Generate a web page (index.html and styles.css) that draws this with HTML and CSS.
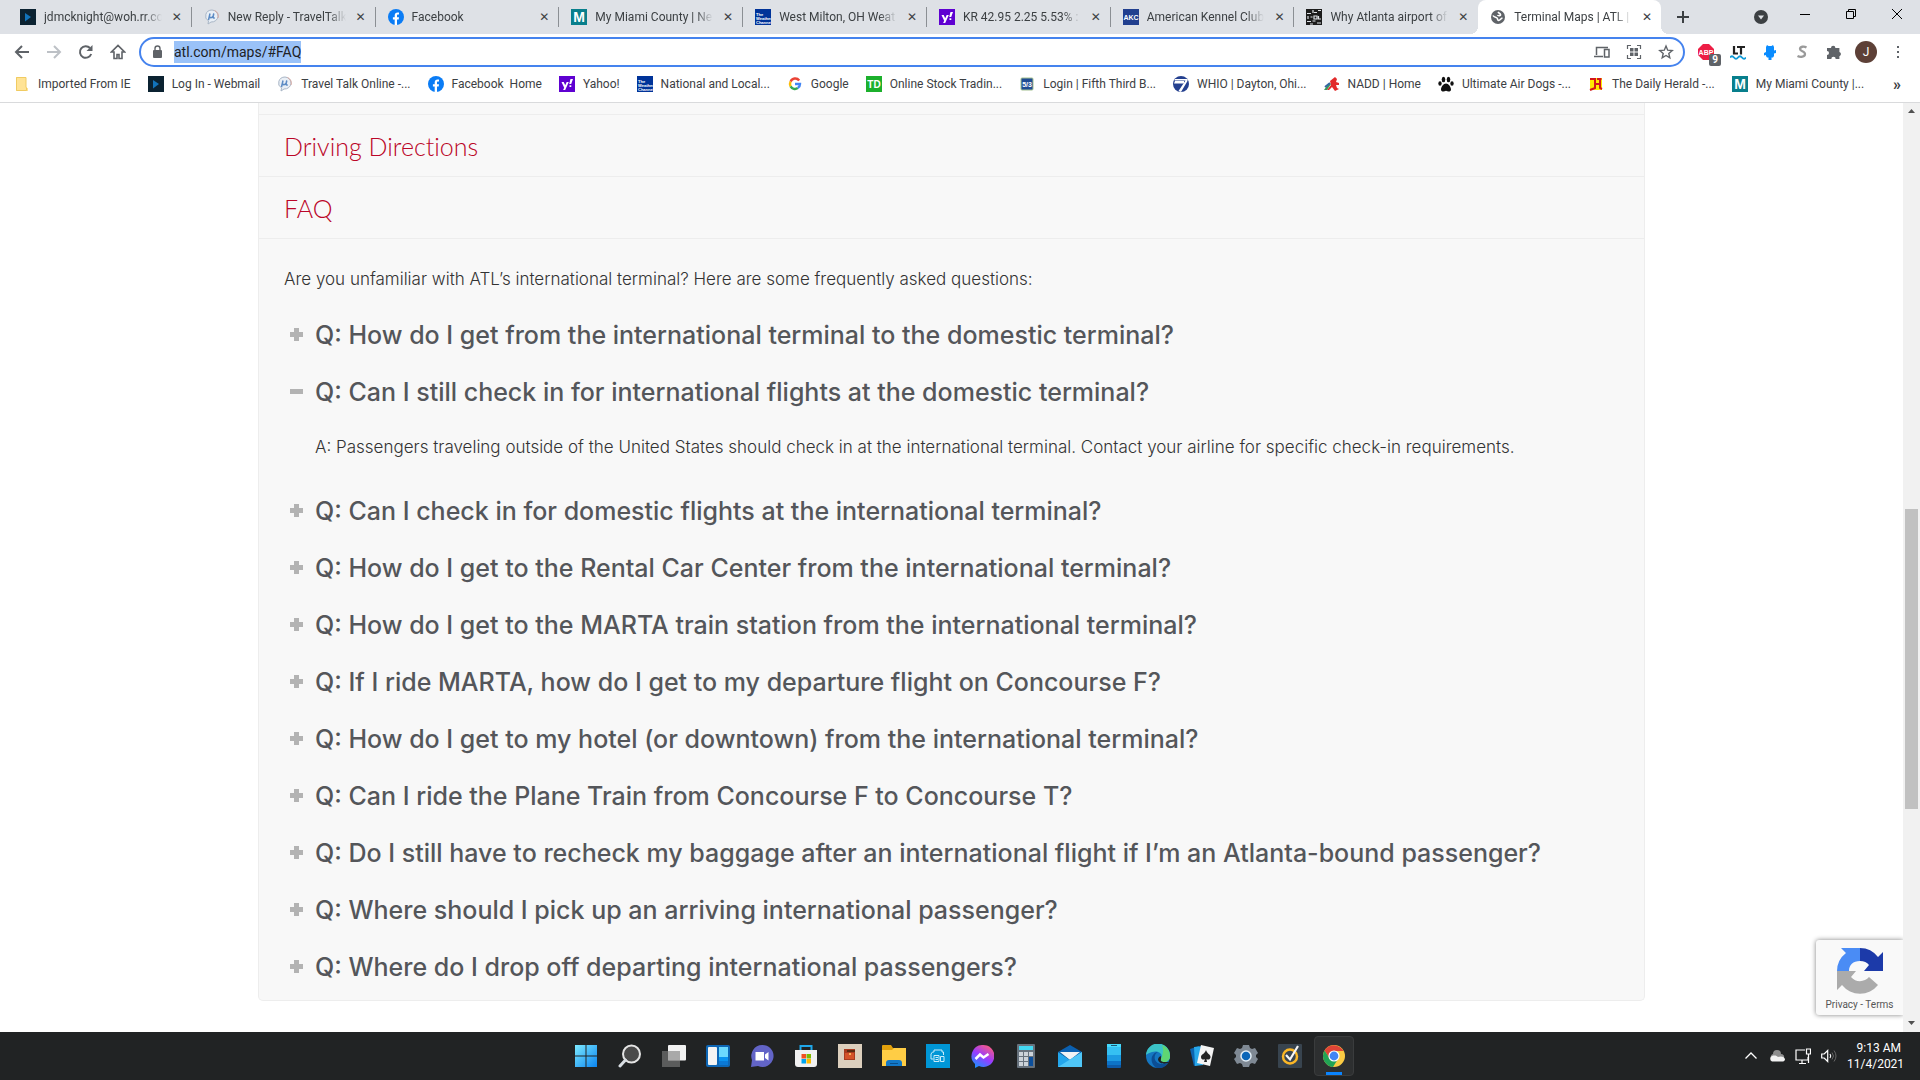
FILE: index.html
```html
<!DOCTYPE html>
<html lang="en">
<head>
    <meta charset="UTF-8">
    <meta name="viewport" content="width=device-width, initial-scale=1.0">
    <title>Terminal Maps | ATL</title>
    <link rel="stylesheet" href="styles.css">
</head>
<body>
    <!-- Shared icons -->
    <svg class="sprite" aria-hidden="true">
        <symbol id="i-play" viewBox="0 0 16 16"><rect width="16" height="16" fill="#0b2231"/><path d="M5 4l6 4-6 4.500z" fill="#1273ba"/></symbol>
        <symbol id="i-talk" viewBox="0 0 16 16"><path d="M8 1a6.500 6 0 1 1-1 12l-3 2 .5-3A6.500 6 0 0 1 8 1z" fill="#e9eff6" stroke="#a9b6c6"/><path d="M10.500 1.500A6 6 0 0 1 14 9" fill="none" stroke="#d9a9a0"/><path d="M6 4.500L4.500 11M5.600 7c-.4 2.500 2.800 2.200 3.600-.3l.6-2.200-.8 3.800c0 1 1 1 1.600.2" fill="none" stroke="#5c8bc4" stroke-width="1.500"/></symbol>
        <symbol id="i-fb" viewBox="0 0 16 16"><circle cx="8" cy="8" r="8" fill="#0a7cf5"/><path d="M6.700 16v-5.400H4.900V8.200h1.800V6.600c0-2 1.100-3 2.900-3 .8 0 1.400.1 1.400.1v1.900h-.9c-.9 0-1.100.5-1.100 1.100v1.500h2l-.3 2.400H9V16z" fill="#fff"/></symbol>
        <symbol id="i-miami" viewBox="0 0 16 16"><rect width="16" height="16" fill="#087f8c"/><text x="8" y="13" class="glyph" font-size="14" text-anchor="middle" fill="#fff">M</text></symbol>
        <symbol id="i-weather" viewBox="0 0 16 16"><rect width="16" height="16" fill="#003399"/><text x="1" y="7" class="glyph" font-size="4" fill="#fff">The</text><text x="1" y="11" class="glyph" font-size="4" fill="#fff">Weather</text><text x="1" y="15" class="glyph" font-size="4" fill="#fff">Channel</text></symbol>
        <symbol id="i-yahoo" viewBox="0 0 16 16"><rect width="16" height="16" fill="#5f01d1"/><path d="M2.500 6h2.200l1.500 3.300L7.700 6h2.100l-3.600 8H4.100l1.100-2.300zM11.500 3H14l-1.800 5h-2zM10.500 9.200h1.800v1.700h-1.800z" fill="#fff"/></symbol>
        <symbol id="i-google" viewBox="0 0 16 16"><path d="M12.200 4.500A5 5 0 0 0 3.600 5.600" fill="none" stroke="#ea4335" stroke-width="2.400"/><path d="M3.600 5.600a5 5 0 0 0 0 4.800" fill="none" stroke="#fbbc05" stroke-width="2.400"/><path d="M3.600 10.400a5 5 0 0 0 7.200 1.700" fill="none" stroke="#34a853" stroke-width="2.400"/><path d="M8 8h5a5 5 0 0 1-2.200 4.100" fill="none" stroke="#4285f4" stroke-width="2.400"/></symbol>
    </svg>

    <!-- Tab strip -->
    <header class="tab-strip">
        <nav class="tabs">
            <div class="tab"><svg class="icon"><use href="#i-play"/></svg><a href="#mail">jdmcknight@woh.rr.co</a><button class="close" aria-label="Close">✕</button></div>
            <div class="tab"><svg class="icon"><use href="#i-talk"/></svg><a href="#talk">New Reply - TravelTalk</a><button class="close" aria-label="Close">✕</button></div>
            <div class="tab"><svg class="icon"><use href="#i-fb"/></svg><a href="#fb">Facebook</a><button class="close" aria-label="Close">✕</button></div>
            <div class="tab"><svg class="icon"><use href="#i-miami"/></svg><a href="#miami">My Miami County | Ne</a><button class="close" aria-label="Close">✕</button></div>
            <div class="tab"><svg class="icon"><use href="#i-weather"/></svg><a href="#weather">West Milton, OH Weat</a><button class="close" aria-label="Close">✕</button></div>
            <div class="tab"><svg class="icon"><use href="#i-yahoo"/></svg><a href="#kr">KR 42.95 2.25 5.53% :</a><button class="close" aria-label="Close">✕</button></div>
            <div class="tab"><svg class="icon" viewBox="0 0 16 16"><rect width="16" height="16" fill="#213f8f"/><text x="8" y="11" class="glyph" font-size="7" text-anchor="middle" fill="#fff">AKC</text></svg><a href="#akc">American Kennel Club</a><button class="close" aria-label="Close">✕</button></div>
            <div class="tab last"><svg class="icon" viewBox="0 0 16 16"><rect width="16" height="16" fill="#1c1c1c"/><path d="M1 4.500h4M7 1v3M8 3.500h3M12 1.500h3M2 7v3M4.500 8h2M8 7h3v3H8zM12.500 7v3h2.500M1 12.500h4M6.500 12h3M11 14h4M4 15h3" fill="none" stroke="#dee1e6" stroke-width="1.200"/></svg><a href="#why">Why Atlanta airport of</a><button class="close" aria-label="Close">✕</button></div>
            <div class="tab active"><svg class="icon" viewBox="0 0 16 16"><circle cx="8" cy="8" r="7" fill="#5f6368"/><path d="M3 6.500c1 2 3 1.500 4 2.500s0 2 1.500 2.500c2 0 2-2 4-2.500M8 3c1 1.500 2 1 2.500 2.500S8 7 7.500 6" fill="none" stroke="#fff" stroke-width="1.600"/></svg><a href="#maps">Terminal Maps | ATL |</a><button class="close" aria-label="Close">✕</button></div>
        </nav>
        <div class="window-tools">
            <button aria-label="New tab"><svg class="icon" viewBox="0 0 16 16"><path d="M8 2v12M2 8h12" stroke="#3c4043" stroke-width="2"/></svg></button>
            <span class="spacer"></span>
            <button aria-label="Search tabs"><svg class="icon" viewBox="0 0 16 16"><circle cx="8" cy="8" r="7" fill="#3c4043"/><path d="M5 6.500h6L8 10.500z" fill="#dee1e6"/></svg></button>
            <div class="window-buttons">
                <button aria-label="Minimize"><svg class="icon" viewBox="0 0 16 16"><path d="M3 8.500h10" stroke="#000"/></svg></button>
                <button aria-label="Restore"><svg class="icon" viewBox="0 0 16 16"><path d="M3.500 5.500h7v7h-7zM5.500 5.500v-2h7v7h-2" fill="none" stroke="#000"/></svg></button>
                <button aria-label="Close window"><svg class="icon" viewBox="0 0 16 16"><path d="M3 3l10 10M13 3L3 13" stroke="#000"/></svg></button>
            </div>
        </div>
    </header>

    <!-- Address bar -->
    <div class="toolbar">
        <button aria-label="Back"><svg class="icon" viewBox="0 0 16 16"><path d="M15 8H2.500M8 2L2 8l6 6" fill="none" stroke="#5f6368" stroke-width="2"/></svg></button>
        <button aria-label="Forward"><svg class="icon" viewBox="0 0 16 16"><path d="M1 8h12.500M8 2l6 6-6 6" fill="none" stroke="#bdc1c6" stroke-width="2"/></svg></button>
        <button aria-label="Reload"><svg class="icon" viewBox="0 0 16 16"><path d="M13.200 10A5.800 5.800 0 1 1 12 4" fill="none" stroke="#5f6368" stroke-width="2"/><path d="M14.500 1v6h-6z" fill="#5f6368"/></svg></button>
        <button aria-label="Home"><svg class="icon" viewBox="0 0 16 16"><path d="M4 8v6.500h3v-4h2v4h3V8h2.500L8 1.500 1.500 8z" fill="none" stroke="#5f6368" stroke-width="1.600"/></svg></button>
        <div class="omnibox">
            <svg class="icon" viewBox="0 0 16 16"><rect x="4" y="6" width="9" height="8" rx="1" fill="#5f6368"/><path d="M6 6V4.500a2.500 2.500 0 0 1 5 0V6" fill="none" stroke="#5f6368" stroke-width="1.400"/></svg>
            <input type="text" id="url" value="atl.com/maps/#FAQ" aria-label="Address" spellcheck="false">
            <button aria-label="Send to device"><svg class="icon" viewBox="0 0 16 16"><path d="M2.500 11V3.500H14M0 12.500h9M10.500 5.500h4.500v7.500h-4.500z" fill="none" stroke="#5f6368" stroke-width="1.500"/></svg></button>
            <button aria-label="QR code"><svg class="icon" viewBox="0 0 16 16"><path d="M1.500 5V1.500H5M11 1.500h3.500V5M14.500 11v3.500H11M5 14.500H1.500V11" fill="none" stroke="#5f6368" stroke-width="1.200"/><path d="M4 4h3.500v3.500H4zM8.500 4H12v3.500H8.500zM4 8.500h3.500V12H4zM8.500 8.500H12V12H8.500z" fill="#5f6368"/></svg></button>
            <button aria-label="Bookmark"><svg class="icon" viewBox="0 0 16 16"><path d="M8 2l1.700 4.200 4.500.3-3.400 2.900 1 4.400L8 11.500l-3.800 2.300 1-4.400L1.800 6.500l4.500-.3z" fill="none" stroke="#5f6368" stroke-width="1.400"/></svg></button>
        </div>
        <button class="abp" aria-label="Adblock Plus"><svg class="icon" viewBox="0 0 16 16"><path d="M5 0h6l5 5v6l-5 5H5l-5-5V5z" fill="#ed1e45"/><text x="8" y="11" class="glyph" font-size="7" text-anchor="middle" fill="#fff">ABP</text></svg><span class="badge">9</span></button>
        <button aria-label="LanguageTool"><svg class="icon" viewBox="0 0 16 16"><path d="M4 2v7.500h4M7 3h8M11 3v7.500" fill="none" stroke="#222" stroke-width="2.200"/><path d="M0 13.500q2-2.500 4 0t4 0 4 0 4 0" fill="none" stroke="#0f9bd8" stroke-width="1.800"/></svg></button>
        <button aria-label="Assistant"><svg class="icon" viewBox="0 0 16 16"><path d="M5 1l1.500 1h3L11 1l1 2v3.500l2-.5v3l-2 .5V12l-1 1.500H9.500V16h-3v-2.500H5L4 12v-1l-2 .5V9l2-1V3z" fill="#0a8cff"/></svg></button>
        <button aria-label="Similar sites"><svg class="icon" viewBox="0 0 16 16"><path d="M12.500 3.500C10 2 6 2.500 6 5s5 2 5 5-4.500 3.500-7.500 2" fill="none" stroke="#9a9a9a" stroke-width="2.300"/></svg></button>
        <button aria-label="Extensions"><svg class="icon" viewBox="0 0 16 16"><path d="M1 4h4a2.200 2.200 0 0 1 4.400 0h4v4a2.200 2.200 0 0 1 0 4.200V15H9.700a2.200 2.200 0 0 0-4.400 0H1v-4a2 2 0 0 0 0-4z" fill="#5f6368"/></svg></button>
        <button class="avatar" aria-label="Profile">J</button>
        <button aria-label="Menu"><svg class="icon" viewBox="0 0 16 16"><path d="M7 2h2v2H7zM7 7h2v2H7zM7 12h2v2H7z" fill="#5f6368"/></svg></button>
    </div>

    <!-- Bookmarks -->
    <nav class="bookmarks">
        <a href="#b1"><svg class="icon" viewBox="0 0 16 16"><path d="M2 1h10v11h2v3H2z" fill="#ffe395"/><path d="M12.500 11.500v3H2.500v-13h9.500v10z" fill="none" stroke="#f0cb62"/></svg>Imported From IE</a>
        <a href="#b2"><svg class="icon"><use href="#i-play"/></svg>Log In - Webmail</a>
        <a href="#b3"><svg class="icon"><use href="#i-talk"/></svg>Travel Talk Online -...</a>
        <a href="#b4"><svg class="icon"><use href="#i-fb"/></svg>Facebook&nbsp; Home</a>
        <a href="#b5"><svg class="icon"><use href="#i-yahoo"/></svg>Yahoo!</a>
        <a href="#b6"><svg class="icon"><use href="#i-weather"/></svg>National and Local...</a>
        <a href="#b7"><svg class="icon"><use href="#i-google"/></svg>Google</a>
        <a href="#b8"><svg class="icon" viewBox="0 0 16 16"><rect width="16" height="16" fill="#1cb02c"/><text x="8" y="12" class="glyph" font-size="10" text-anchor="middle" fill="#fff">TD</text></svg>Online Stock Tradin...</a>
        <a href="#b9"><svg class="icon" viewBox="0 0 16 16"><rect x="2" y="2" width="12" height="12" rx="1" fill="#1f4b94" stroke="#a3c08f"/><text x="8" y="11" class="glyph" font-size="7" text-anchor="middle" fill="#fff">5/3</text></svg>Login | Fifth Third B...</a>
        <a href="#b10"><svg class="icon" viewBox="0 0 16 16"><circle cx="8" cy="8" r="8" fill="#24408f"/><path d="M1.500 4.500h11L5.500 15 8 16l6.500-11V3H2zM2 5h9v2.500H1z" fill="#fff"/></svg>WHIO | Dayton, Ohi...</a>
        <a href="#b11"><svg class="icon" viewBox="0 0 16 16"><path d="M0 14L5 7l2 1-4 6z" fill="#3a9a5c"/><path d="M1 11l5-4" stroke="#3465a4" stroke-width="2"/><path d="M6 5l5-4 2 2-1 3 3 1v2h-3l1 3 2 1-4 2-3-4-3 3H3l4-5z" fill="#e22b2b"/></svg>NADD | Home</a>
        <a href="#b12"><svg class="icon" viewBox="0 0 16 16"><g fill="#111"><ellipse cx="5.500" cy="3.500" rx="1.800" ry="2.700"/><ellipse cx="10.500" cy="3.500" rx="1.800" ry="2.700"/><ellipse cx="2" cy="7.500" rx="1.700" ry="2.200"/><ellipse cx="14" cy="7.500" rx="1.700" ry="2.200"/><path d="M8 7.500c2.500 0 5 3.500 5 6s-3 2.500-5 1.300c-2 1.200-5 1.200-5-1.300s2.500-6 5-6z"/></g></svg>Ultimate Air Dogs -...</a>
        <a href="#b13"><svg class="icon" viewBox="0 0 16 16"><rect x="2" y="2" width="12" height="12" fill="#ffe900"/><path d="M2 3h5v9l-5 2M7 8h5M9 3h4.500M12 3v9l2 1" fill="none" stroke="#d2161b" stroke-width="2"/></svg>The Daily Herald -...</a>
        <a href="#b14"><svg class="icon"><use href="#i-miami"/></svg>My Miami County |...</a>
        <button class="more" aria-label="More bookmarks">»</button>
    </nav>

    <!-- Page -->
    <div class="viewport">
        <main class="page">
            <section class="accordion">
                <div class="previous-row"></div>
                <h2><a href="#driving">Driving Directions</a></h2>
                <h2><a href="#FAQ">FAQ</a></h2>
                <div class="faq">
                    <p class="intro">Are you unfamiliar with ATL’s international terminal? Here are some frequently asked questions:</p>
                    <h3><button class="question">Q: How do I get from the international terminal to the domestic terminal?</button></h3>
                    <h3><button class="question open">Q: Can I still check in for international flights at the domestic terminal?</button></h3>
                    <p class="answer">A: Passengers traveling outside of the United States should check in at the international terminal. Contact your airline for specific check-in requirements.</p>
                    <h3><button class="question">Q: Can I check in for domestic flights at the international terminal?</button></h3>
                    <h3><button class="question">Q: How do I get to the Rental Car Center from the international terminal?</button></h3>
                    <h3><button class="question">Q: How do I get to the MARTA train station from the international terminal?</button></h3>
                    <h3><button class="question">Q: If I ride MARTA, how do I get to my departure flight on Concourse F?</button></h3>
                    <h3><button class="question">Q: How do I get to my hotel (or downtown) from the international terminal?</button></h3>
                    <h3><button class="question">Q: Can I ride the Plane Train from Concourse F to Concourse T?</button></h3>
                    <h3><button class="question">Q: Do I still have to recheck my baggage after an international flight if I’m an Atlanta-bound passenger?</button></h3>
                    <h3><button class="question">Q: Where should I pick up an arriving international passenger?</button></h3>
                    <h3><button class="question">Q: Where do I drop off departing international passengers?</button></h3>
                </div>
            </section>
            <aside class="recaptcha">
                <svg class="recaptcha-logo" viewBox="0 0 46 46"><path d="M46 23V4l-5 5A23 23 0 0 0 23 0v13c4 0 7 1.500 9 4l-5 6z" fill="#1c3aa9"/><path d="M23 0H4l5 5a23 23 0 0 0-9 18h12c0-6 4-10 11-10z" fill="#4a8cf5"/><path d="M0 23v19l5-5a23 23 0 0 0 36 0l-9-8c-4 5-13 6-18 0l5-6z" fill="#ababab"/></svg>
                <span><a href="#privacy">Privacy</a> - <a href="#terms">Terms</a></span>
            </aside>
        </main>
        <div class="scrollbar"><span class="arrow up"></span><span class="track"><span class="thumb"></span></span><span class="arrow down"></span></div>
    </div>

    <!-- Taskbar -->
    <footer class="taskbar">
        <div class="apps">
            <button aria-label="Start"><svg viewBox="0 0 24 24"><defs><linearGradient id="win" x2="1" y2="1"><stop stop-color="#7deaff"/><stop offset="1" stop-color="#0a84f0"/></linearGradient></defs><path d="M1 1h10.500v10.500H1zM12.500 1H23v10.500H12.500zM1 12.500h10.500V23H1zM12.500 12.500H23V23H12.500z" fill="url(#win)"/></svg></button>
            <button aria-label="Search"><svg viewBox="0 0 24 24"><circle cx="13.500" cy="10" r="8.500" fill="#4a4a4a" stroke="#e4e4e4" stroke-width="2"/><path d="M7.500 16L2 22" stroke="#d8dde2" stroke-width="3" stroke-linecap="round"/></svg></button>
            <button aria-label="Task view"><svg viewBox="0 0 24 24"><rect x="6" y="1" width="18" height="15.500" rx="1" fill="#f2f2f2"/><path d="M0 7h18v16H0z" fill="#6a6a6a" opacity=".8"/><path d="M6 7h12v9.500H6z" fill="#a9a9a9"/></svg></button>
            <button aria-label="Widgets"><svg viewBox="0 0 24 24"><rect y="1" width="24" height="22" rx="2" fill="#0d66b5"/><rect x="2" y="3" width="9" height="18" rx="1" fill="#f3f3f3"/><path d="M13 3h9v10h-9z" fill="#6cd9ff"/><path d="M13 13h9v4h-9z" fill="#0a93f0"/><path d="M13 17h9v4h-9z" fill="#0b79d6"/></svg></button>
            <button aria-label="Chat"><svg viewBox="0 0 24 24"><path d="M12 1a11 11 0 1 1-4 21l-7 1 1-7A11 11 0 0 1 12 1z" fill="#6264c7"/><path d="M5.500 8h8.500v8.500H5.500zM15 10.500L18.500 8v8.500L15 14z" fill="#fff"/></svg></button>
            <button aria-label="Store"><svg viewBox="0 0 24 24"><path d="M6.500 7V2h11v5" fill="none" stroke="#1fa7ea" stroke-width="2"/><path d="M1 6h22v14a3 3 0 0 1-3 3H4a3 3 0 0 1-3-3z" fill="#f1f1f1"/><path d="M7.500 10H12v4.500H7.500z" fill="#f25022"/><path d="M12.500 10H17v4.500h-4.500z" fill="#7fba00"/><path d="M7.500 15H12v4.500H7.500z" fill="#00a4ef"/><path d="M12.500 15H17v4.500h-4.500z" fill="#ffb900"/></svg></button>
            <button aria-label="Wallet"><svg viewBox="0 0 24 24"><rect width="24" height="24" fill="#dccfbd"/><path d="M6 5h11v11H6z" fill="#a83c20"/><path d="M7 9h9v6H7z" fill="#d4532a"/><path d="M9 7h8" stroke="#5b2a12" stroke-width="2"/><circle cx="12" cy="10" r="1" fill="#ffd56e"/></svg></button>
            <button aria-label="File Explorer"><svg viewBox="0 0 24 24"><path d="M0 2a1 1 0 0 1 1-1h8l2 3h12a1 1 0 0 1 1 1v6H0z" fill="#e2a10c"/><path d="M0 6h10l2-2h12v18H0z" fill="#ffcd45"/><path d="M4 22v-3a3 3 0 0 1 3-3h10a3 3 0 0 1 3 3v3z" fill="#1278c8"/><path d="M8 19.500h8" stroke="#0a4f8c"/></svg></button>
            <button aria-label="Printer"><svg viewBox="0 0 24 24"><rect width="24" height="24" fill="#0096d6"/><path d="M8 8V6h8v2h1.500v3M8 8H6.500L5 10v5h2.500M8 11.500h5v6H8zM9.500 13.500H12M9.500 15.500H12M14.500 12.500h3.500v5h-3.500z" fill="none" stroke="#c9ecfa"/></svg></button>
            <button aria-label="Messenger"><svg viewBox="0 0 24 24"><defs><linearGradient id="msg" x1=".2" y1="1" x2=".8" y2="0"><stop stop-color="#1692ff"/><stop offset=".5" stop-color="#9a3bff"/><stop offset="1" stop-color="#ff5d7a"/></linearGradient></defs><path d="M12 1a11 11 0 1 1-3 21l-4 2v-4A11 11 0 0 1 12 1z" fill="url(#msg)"/><path d="M5.500 15L10 10.500l3.500 3L18.500 10" fill="none" stroke="#fff" stroke-width="2.500"/></svg></button>
            <button aria-label="Calculator"><svg viewBox="0 0 24 24"><rect x="3" width="18" height="24" rx="1" fill="#67727d"/><path d="M5 2h14v4H5z" fill="#43d8f2"/><path d="M5 8h4v4H5zM10 8h4v4h-4zM15 8h4v4h-4zM5 13h4v4H5zM10 13h4v4h-4zM5 18h4v4H5zM10 18h4v4h-4z" fill="#ccd3da"/><path d="M15 13h4v9h-4z" fill="#0c4f9c"/></svg></button>
            <button aria-label="Mail"><svg viewBox="0 0 24 24"><path d="M0 8l12-7 12 7-12 8z" fill="#0b60b0"/><path d="M2 8h20l-10 8z" fill="#f1f3f5"/><path d="M0 8l12 8L24 8v15H0z" fill="#23a6ec"/><path d="M0 23l24-15v15z" fill="#4fc6f7"/></svg></button>
            <button aria-label="Your Phone"><svg viewBox="0 0 24 24"><rect x="5" width="14" height="24" rx="1" fill="#0d5aa8"/><path d="M5 0h14v5H5z" fill="#46d9fb"/><path d="M5 3h14v8H5z" fill="#35c0f2"/><path d="M5 11h14v6H5z" fill="#1c9be2"/><path d="M5 17h14v4H5z" fill="#0d74c8"/><path d="M9 1.500h6" stroke="#175879"/></svg></button>
            <button aria-label="Edge"><svg viewBox="0 0 24 24"><circle cx="12" cy="12" r="12" fill="#1577c2"/><path d="M0 11A12 12 0 0 1 24 12c0 4-3 6-6 6-2 0-4-1-3-3 3-6-4-9-9-7-3 1-5 2-6 3z" fill="#3bc3c7"/><path d="M16 1a12 12 0 0 1 8 11c0 4-3 6-6 6-2 0-4-1-3-3 2-5 3-9 1-14z" fill="#5fd673"/><path d="M12 8c-6 3-4 13 6 12 2 0 4-1 5-2a12 12 0 0 1-12 6C6 22 4 15 7 11c1-2 3-3 5-3z" fill="#0c4e94"/><path d="M15 15c-1 2 1 3 3 3l5 0c-3 3-11 2-11-3a4 4 0 0 1 3-3z" fill="#202323"/></svg></button>
            <button aria-label="Solitaire"><svg viewBox="0 0 24 24"><path d="M0 5l9-3 3 18-8 2z" fill="#0d63ae"/><path d="M4 3l9-1v19l-8 1z" fill="#28a8ea"/><path d="M11 1l13 3-4 18-13-3z" fill="#f4f4f4"/><path d="M16 6c-1 4-5 4-5 7s3 3 4 2l-1 3h3l-.5-3c2 1.500 4 0 4-2 0-3-3.500-3-4.500-7z" fill="#222"/></svg></button>
            <button aria-label="Settings"><svg viewBox="0 0 24 24"><path d="M9 1h6l1 3 2 1 3-1 3 5-2 2v2l2 2-3 5-3-1-2 1-1 3H9l-1-3-2-1-3 1-3-5 2-2v-2L0 9l3-5 3 1 2-1z" fill="#7f8994"/><circle cx="12" cy="12" r="5" fill="#0c66b8" stroke="#e3edf5" stroke-width="1.500"/></svg></button>
            <button aria-label="Norton"><svg viewBox="0 0 24 24"><rect width="24" height="24" rx="1" fill="#38444f"/><circle cx="12" cy="12.500" r="7" fill="none" stroke="#fbb726" stroke-width="2.500"/><path d="M8 11l4 4.500L20 2" fill="none" stroke="#f6f6f6" stroke-width="2.200"/></svg></button>
            <button class="running" aria-label="Chrome"><svg viewBox="0 0 24 24"><circle cx="12" cy="12" r="11" fill="#fbcb43"/><path d="M2.500 6.500A11 11 0 0 1 21.500 7H12l-4.500 7.500z" fill="#df4437"/><path d="M2.500 6.500L7.700 14.500 16.300 14.500 11 23A11 11 0 0 1 2.500 6.500z" fill="#21a355"/><circle cx="12" cy="12" r="5" fill="#4285f4" stroke="#fff" stroke-width="1.200"/></svg></button>
        </div>
        <div class="tray">
            <button aria-label="Hidden icons"><svg class="icon" viewBox="0 0 16 16"><path d="M2.500 10.500L8 5l5.500 5.500" fill="none" stroke="#fff" stroke-width="1.300"/></svg></button>
            <button aria-label="OneDrive"><svg class="icon" viewBox="0 0 16 16"><path d="M2 10a3 3 0 0 1 2-4 4 4 0 0 1 8 0 3 3 0 0 1 3 4z" fill="#8d8d8d"/><path d="M3 13.500a3 3 0 0 1 0-5.500c3-1 5 0 6 1 2-1 6-1 7 2 0 1.500-1 2.500-2 2.500z" fill="#f2f2f2"/></svg></button>
            <button aria-label="Network"><svg class="icon" viewBox="0 0 16 16"><path d="M10 2H1v10h12V9M7 12v3M4 15.500h7M11.500 1h4v5h-4zM13.500 6v9" fill="none" stroke="#fff" stroke-width="1.200"/></svg></button>
            <button aria-label="Volume"><svg class="icon" viewBox="0 0 16 16"><path d="M.7 6h2.500l3.500-3.500v11L3.200 10H.7zM9 6q1.500 2 0 4" fill="none" stroke="#fff" stroke-width="1.200"/><path d="M11 4.500q3 3.500 0 7M13 2.500q4 5.500 0 11" fill="none" stroke="#666"/></svg></button>
            <time class="clock">9:13 AM<br>11/4/2021</time>
        </div>
    </footer>

    <script>
        // Focus the address bar with its text selected
        const url = document.getElementById('url');
        url.focus();
        url.select();
    </script>
</body>
</html>
```
FILE: styles.css
```css
* {
    box-sizing: border-box;
}

body {
    display: flex;
    flex-direction: column;
    height: 100vh;
    margin: 0;
    overflow: hidden;
    background-color: #fff;
    color: #3c4043;
    font-family: Roboto, "Open Sans", sans-serif;
    font-size: 12px;
}

a {
    color: inherit;
    text-decoration: none;
}

button {
    display: flex;
    justify-content: center;
    align-items: center;
    padding: 0;
    border: none;
    background: none;
    color: inherit;
    font: inherit;
}

.sprite {
    display: none;
}

.icon {
    flex: none;
    width: 16px;
    height: 16px;
}

.glyph {
    font-family: "Liberation Sans", Arial, sans-serif;
    font-weight: bold;
}

/* Tab strip */
.tab-strip {
    display: flex;
    flex: none;
    height: 34px;
    padding-left: 8px;
    background-color: #dee1e6;
}

.tabs {
    display: flex;
    flex: 1;
    align-items: center;
    min-width: 0;
}

.tab {
    display: flex;
    flex: 1;
    align-items: center;
    gap: 8px;
    min-width: 0;
    height: 20px;
    padding: 0 7px 0 12px;
    border-right: 1px solid #8b8f94;
}

.tab a {
    flex: 1;
    overflow: hidden;
    white-space: nowrap;
    mask-image: linear-gradient(to right, #000 85%, transparent);
}

.tab.last {
    border-right-color: transparent;
}

.tab.active {
    position: relative;
    height: 34px;
    border-right: none;
    border-radius: 8px 8px 0 0;
    background-color: #fff;
}

.tab.active::before,
.tab.active::after {
    content: "";
    position: absolute;
    bottom: 0;
    width: 8px;
    height: 8px;
}

.tab.active::before {
    left: -8px;
    background: radial-gradient(circle at 0 0, transparent 8px, #fff 8px);
}

.tab.active::after {
    right: -8px;
    background: radial-gradient(circle at 100% 0, transparent 8px, #fff 8px);
}

.close {
    width: 14px;
    font-family: "DejaVu Sans", sans-serif;
    font-size: 12px;
}

.window-tools {
    display: flex;
    align-items: center;
    width: 259px;
    padding-left: 14px;
}

.spacer {
    flex: 1;
}

.window-buttons {
    display: flex;
    align-items: center;
    height: 28px;
    align-self: flex-start;
    margin-left: 13px;
}

.window-buttons button {
    width: 46px;
}

/* Toolbar */
.toolbar {
    display: flex;
    flex: none;
    align-items: center;
    height: 36px;
    padding: 0 6px;
}

.toolbar button {
    width: 32px;
    height: 30px;
}

.omnibox {
    display: flex;
    flex: 1;
    align-items: center;
    height: 30px;
    margin: 0 5px;
    padding: 0 1px 0 8px;
    border: 2px solid #4583ee;
    border-radius: 15px;
}

.omnibox input {
    flex: 1;
    height: 22px;
    margin-left: 9px;
    padding: 0;
    border: none;
    outline: none;
    color: #202124;
    font-family: Roboto, "Open Sans", sans-serif;
    font-size: 14px;
    line-height: 22px;
}

.omnibox input::selection {
    background-color: #9ac2f8;
    color: #202124;
}

.abp {
    position: relative;
}

.badge {
    position: absolute;
    right: 1px;
    bottom: 1px;
    width: 12px;
    border-radius: 2px;
    background-color: #5f6368;
    color: #fff;
    font-size: 10px;
    font-weight: bold;
    line-height: 12px;
}

.toolbar .avatar {
    width: 22px;
    height: 22px;
    margin: 0 5px;
    border-radius: 50%;
    background-color: #5d4037;
    color: #fff;
}

/* Bookmarks */
.bookmarks {
    display: flex;
    flex: none;
    align-items: center;
    gap: 17px;
    height: 33px;
    padding: 0 19px 4px 14px;
    border-bottom: 1px solid #d9dadc;
    white-space: nowrap;
}

.bookmarks a {
    display: flex;
    align-items: center;
    gap: 8px;
}

.more {
    margin-left: auto;
    font-size: 16px;
    font-weight: bold;
}

/* Page */
.viewport {
    display: flex;
    flex: 1;
    min-height: 0;
}

.page {
    position: relative;
    flex: 1;
    overflow: hidden;
    font-family: Inter, Lato, sans-serif;
}

.accordion {
    max-width: 1387px;
    margin: 0 auto;
    border: 1px solid #ededed;
    border-top: none;
    border-radius: 0 0 5px 5px;
    background-color: #f8f8f8;
}

.previous-row {
    height: 12px;
    border-bottom: 1px solid #ededed;
}

.accordion h2 {
    margin: 0;
    padding: 1px 25px 0;
    border-bottom: 1px solid #ededed;
    color: #bb0628;
    font-family: Lato, sans-serif;
    font-size: 25px;
    font-weight: 300;
    font-variant-ligatures: none;
    line-height: 60px;
}

.faq {
    padding: 26px 25px 4px;
}

.faq p {
    margin: 0;
    color: #333;
    font-size: 17px;
    font-weight: 300;
    line-height: 28px;
}

.faq .intro {
    margin-bottom: 14px;
}

.faq .answer {
    margin: 12px 0 22px 31px;
}

.faq h3 {
    margin: 0;
    color: #54565a;
    font-size: 25px;
    font-weight: 500;
}

.question {
    gap: 12px;
    padding-left: 6px;
    line-height: 57px;
    white-space: nowrap;
}

.question::before {
    content: "";
    width: 13px;
    height: 13px;
    margin-bottom: 3px;
    background:
        linear-gradient(#b3b3b3, #b3b3b3) center / 13px 5px no-repeat,
        linear-gradient(#b3b3b3, #b3b3b3) center / 5px 13px no-repeat;
}

.question.open::before {
    background-size: 13px 5px, 0 0;
}

.recaptcha {
    position: absolute;
    right: 0;
    bottom: 17px;
    display: flex;
    flex-direction: column;
    align-items: center;
    width: 87px;
    padding-top: 8px;
    border-radius: 3px 0 0 3px;
    background-color: #f9f9f9;
    box-shadow: 0 0 5px #808080;
    color: #555;
    font-family: Roboto, sans-serif;
    font-size: 10px;
    line-height: 21px;
}

.recaptcha-logo {
    width: 46px;
    height: 46px;
}

.scrollbar {
    display: flex;
    flex-direction: column;
    width: 17px;
    background-color: #f1f1f1;
}

.track {
    flex: 1;
    padding: 389px 2px 206px;
}

.thumb {
    display: block;
    height: 100%;
    background-color: #c1c1c1;
}

.arrow {
    height: 17px;
    padding: 6px 5px;
}

.arrow::before {
    content: "";
    display: block;
    height: 4px;
    background-color: #505050;
    clip-path: polygon(50% 0, 100% 100%, 0 100%);
}

.arrow.down::before {
    clip-path: polygon(0 0, 100% 0, 50% 100%);
}

/* Taskbar */
.taskbar {
    display: grid;
    grid-template-columns: 1fr auto 1fr;
    flex: none;
    align-items: center;
    height: 48px;
    background-color: #212324;
    color: #fff;
}

.apps {
    display: flex;
    grid-column: 2;
    gap: 4px;
}

.apps button {
    width: 40px;
    height: 40px;
    border-radius: 4px;
}

.apps svg {
    width: 24px;
    height: 24px;
}

.apps .running {
    border: 1px solid #3a3c3d;
    background:
        linear-gradient(#0a84ff, #0a84ff) center bottom / 16px 3px no-repeat,
        #2d2f30;
}

.tray {
    display: flex;
    justify-content: flex-end;
    align-items: center;
    gap: 10px;
    padding-right: 19px;
}

.clock {
    width: 54px;
    line-height: 16px;
    text-align: right;
}
```
